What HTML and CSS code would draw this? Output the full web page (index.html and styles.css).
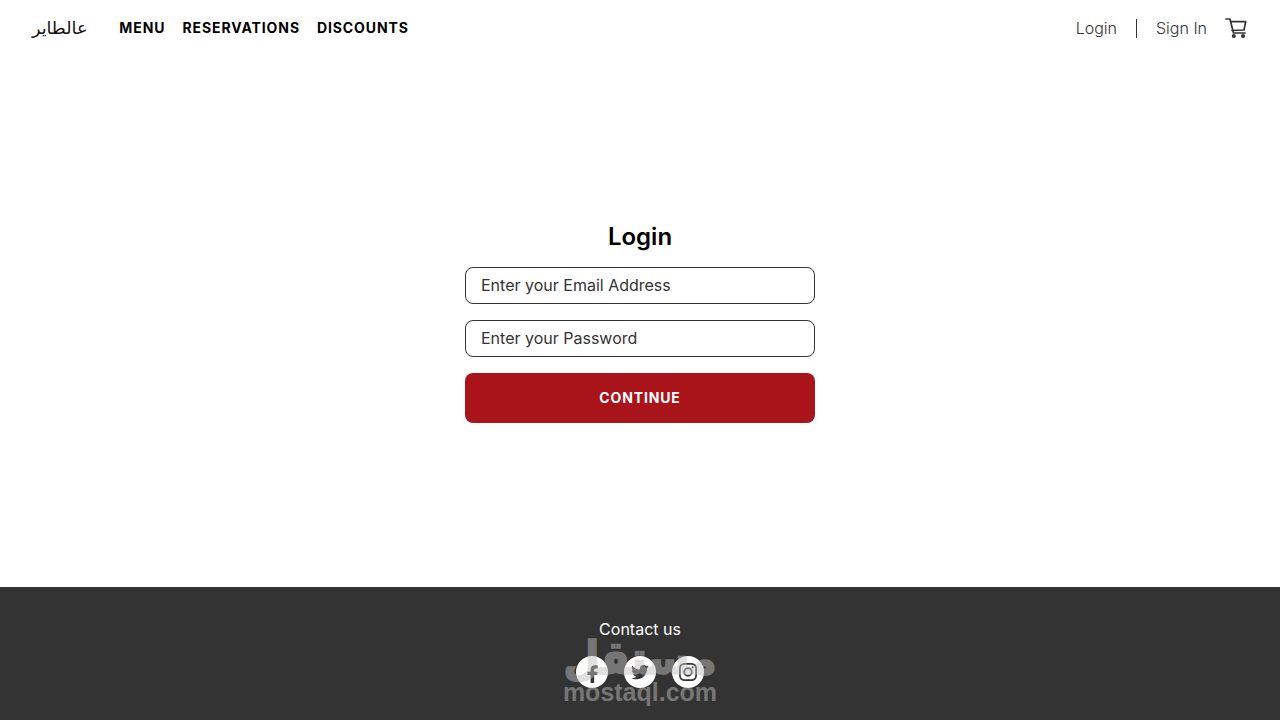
FILE: index.html
```html
<!DOCTYPE html>
<html lang="en">
<head>
    <meta charset="UTF-8">
    <meta name="viewport" content="width=device-width, initial-scale=1.0">
    <title>Login</title>
    <link rel="stylesheet" href="styles.css">
</head>
<body>
    <!-- top bar -->
    <header class="navbar">
        <div class="nav-left">
            <a class="brand" href="#">عالطاير</a>
            <nav class="nav-links">
                <a href="#">MENU</a>
                <a href="#">RESERVATIONS</a>
                <a href="#">DISCOUNTS</a>
            </nav>
        </div>
        <div class="nav-right">
            <a class="nav-login" href="#">Login</a>
            <span class="nav-divider"></span>
            <a class="nav-signin" href="#">Sign In</a>
            <a class="cart" href="#" aria-label="Cart">
                <svg width="22" height="20" viewBox="0 0 22 20" fill="none" stroke="#333" stroke-width="1.7" stroke-linecap="round" stroke-linejoin="round">
                    <path d="M1 1h4l3.500 14H20"/>
                    <path d="M5.500 3.700h15.200L19 12l-12 .5"/>
                    <circle cx="8.800" cy="18" r="1.200"/>
                    <circle cx="18" cy="18" r="1.200"/>
                </svg>
            </a>
        </div>
    </header>

    <!-- login form -->
    <main class="content">
        <form class="login-form">
            <h1>Login</h1>
            <input type="email" placeholder="Enter your Email Address">
            <input type="password" placeholder="Enter your Password">
            <button type="button">CONTINUE</button>
        </form>
    </main>

    <footer class="footer">
        <p>Contact us</p>
        <div class="socials">
            <a class="social" href="#" aria-label="Facebook">
                <svg class="icon-fb" width="18" height="18" viewBox="0 0 20 20" fill="#333">
                    <path d="M12.400 20v-9h3.200l.5-3.600h-3.700V5.500c0-1 .4-1.700 1.800-1.700h2V.6C15.300.5 14.300.4 13.300.4 10.400.4 8.400 2 8.400 5.100v2.300H4.900V11h3.500v9z"/>
                </svg>
            </a>
            <a class="social" href="#" aria-label="Twitter">
                <svg width="18" height="15" viewBox="0 0 24 20" fill="#333">
                    <path d="M24 2.400c-.9.400-1.800.7-2.800.8 1-.6 1.800-1.600 2.200-2.700-1 .6-2 1-3.100 1.200C19.300.7 18 0 16.600 0c-2.700 0-4.900 2.200-4.900 4.900 0 .4 0 .8.100 1.100C7.700 5.800 4.100 3.900 1.700.9c-.4.700-.7 1.600-.7 2.500 0 1.700.9 3.200 2.200 4.100-.8 0-1.600-.2-2.200-.6v.1c0 2.400 1.700 4.400 3.900 4.800-.4.100-.8.200-1.300.2-.3 0-.6 0-.9-.1.6 2 2.400 3.400 4.600 3.400-1.700 1.300-3.800 2.100-6.100 2.100-.4 0-.8 0-1.200-.1C2.200 18.300 4.800 19 7.500 19c9.100 0 14-7.500 14-14v-.6c1-.7 1.800-1.600 2.500-2z"/>
                </svg>
            </a>
            <a class="social" href="#" aria-label="Instagram">
                <svg width="18" height="18" viewBox="0 0 20 20" fill="none" stroke="#333" stroke-width="1.900">
                    <rect x="1" y="1" width="18" height="18" rx="5"/>
                    <circle cx="10" cy="10" r="4.200"/>
                    <circle cx="15.200" cy="4.800" r="1.100" fill="#333" stroke="none"/>
                </svg>
            </a>
        </div>
        <!-- watermark over the footer -->
        <div class="watermark">
            <span class="wm-ar">مستقل</span>
            <span class="wm-en">mostaql.com</span>
        </div>
    </footer>
</body>
</html>
```

FILE: styles.css
```css
* {
    box-sizing: border-box;
}

body {
    font-family: Inter, "Noto Sans", sans-serif;
    background-color: white;
    margin: 0;
    height: 720px;
    display: flex;
    flex-direction: column;
    overflow: hidden;
}

a {
    color: inherit;
    text-decoration: none;
}

.navbar {
    height: 56px;
    padding: 0 33px 0 32px;
    display: flex;
    align-items: center;
    justify-content: space-between;
}

.nav-left {
    display: flex;
    align-items: center;
    gap: 32px;
}

.brand {
    font-family: "DejaVu Sans", sans-serif;
    font-size: 17.5px;
    color: #111;
}

.nav-links {
    display: flex;
    gap: 17px;
    padding-bottom: 2px;
    font-size: 14px;
    font-weight: 700;
    letter-spacing: 0.9px;
    color: black;
}

.nav-right {
    display: flex;
    align-items: center;
    font-size: 16px;
    font-weight: 300;
    color: #333;
}

.nav-divider {
    width: 1px;
    height: 19px;
    background-color: #333;
    margin: 0 19px;
}

.cart {
    display: flex;
    margin-left: 18px;
}

.content {
    flex: 1;
    display: flex;
    align-items: center;
    justify-content: center;
}

.login-form {
    width: 350px;
    display: flex;
    flex-direction: column;
    gap: 16px;
    margin-top: 1px;
}

.login-form h1 {
    margin: 0 0 -1px;
    font-size: 24px;
    font-weight: 600;
    line-height: 30px;
    text-align: center;
    color: black;
}

.login-form input {
    height: 37px;
    padding: 0 15px;
    border: 1px solid #333;
    border-radius: 8px;
    font-family: inherit;
    font-size: 16px;
    color: #333;
}

.login-form input::placeholder {
    color: #333;
    opacity: 1;
}

.login-form button {
    height: 50px;
    background-color: #a9141a;
    color: white;
    border: none;
    border-radius: 8px;
    font-family: inherit;
    font-size: 14px;
    font-weight: 700;
    letter-spacing: 0.85px;
}

.footer {
    position: relative;
    height: 133px;
    background-color: #333;
    color: white;
    display: flex;
    flex-direction: column;
    align-items: center;
    padding-top: 33px;
    gap: 17px;
    font-size: 16px;
}

.footer p {
    margin: 0;
    line-height: 19px;
}

.socials {
    display: flex;
    gap: 16px;
}

.social {
    width: 32px;
    height: 32px;
    background-color: white;
    border-radius: 50%;
    display: flex;
    align-items: center;
    justify-content: center;
}

.icon-fb {
    margin-top: 3px;
}

.watermark {
    position: absolute;
    left: 0;
    right: 0;
    top: 46px;
    display: flex;
    flex-direction: column;
    align-items: center;
    color: #bfbfbf;
    opacity: 0.48;
    pointer-events: none;
}

.wm-ar {
    font-family: "DejaVu Sans", sans-serif;
    font-size: 42px;
    font-weight: 700;
    line-height: 52px;
    -webkit-text-stroke: 1.5px #bfbfbf;
    transform: scaleY(1.1);
}

.wm-en {
    margin-top: -4px;
    font-family: "Liberation Sans", sans-serif;
    font-size: 25px;
    font-weight: 700;
    line-height: 22px;
}
```
